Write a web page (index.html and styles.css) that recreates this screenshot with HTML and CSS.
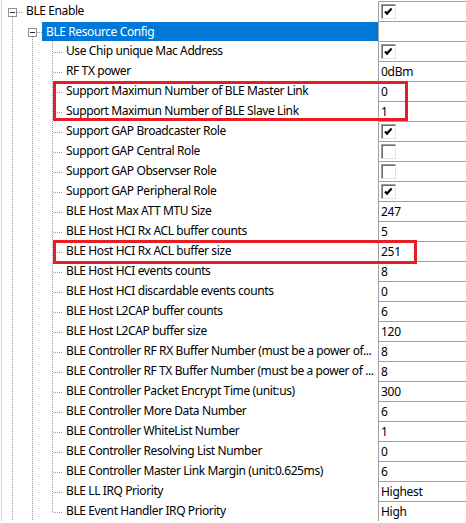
FILE: index.html
```html
<!DOCTYPE html>
<html>
<head>
  <meta charset="UTF-8">
  <title>BLE Config</title>
  <link rel="stylesheet" href="styles.css">
</head>
<body>
  <div class="grid">
    <div class="row">
      <div class="name">
        <span class="guide toggle"><span class="box"></span></span>
        <span class="label">BLE Enable</span>
      </div>
      <div class="value"><span class="check on"></span></div>
    </div>
    <div class="row">
      <div class="name">
        <span class="guide line"></span>
        <span class="guide toggle"><span class="box"></span></span>
        <span class="label selected">BLE Resource Config</span>
      </div>
      <div class="value"></div>
    </div>
    <div class="row">
      <div class="name"><span class="guide line"></span><span class="guide line"></span><span class="guide branch"></span>
        <span class="label">Use Chip unique Mac Address</span></div>
      <div class="value"><span class="check on"></span></div>
    </div>
    <div class="row">
      <div class="name"><span class="guide line"></span><span class="guide line"></span><span class="guide branch"></span>
        <span class="label">RF TX power</span></div>
      <div class="value">0dBm</div>
    </div>
    <div class="row">
      <div class="name"><span class="guide line"></span><span class="guide line"></span><span class="guide branch"></span>
        <span class="label">Support Maximun Number of BLE Master Link</span></div>
      <div class="value">0</div>
    </div>
    <div class="row">
      <div class="name"><span class="guide line"></span><span class="guide line"></span><span class="guide branch"></span>
        <span class="label">Support Maximun Number of BLE Slave Link</span></div>
      <div class="value">1</div>
    </div>
    <div class="row">
      <div class="name"><span class="guide line"></span><span class="guide line"></span><span class="guide branch"></span>
        <span class="label">Support GAP Broadcaster Role</span></div>
      <div class="value"><span class="check on"></span></div>
    </div>
    <div class="row">
      <div class="name"><span class="guide line"></span><span class="guide line"></span><span class="guide branch"></span>
        <span class="label">Support GAP Central Role</span></div>
      <div class="value"><span class="check"></span></div>
    </div>
    <div class="row">
      <div class="name"><span class="guide line"></span><span class="guide line"></span><span class="guide branch"></span>
        <span class="label">Support GAP Observser Role</span></div>
      <div class="value"><span class="check"></span></div>
    </div>
    <div class="row">
      <div class="name"><span class="guide line"></span><span class="guide line"></span><span class="guide branch"></span>
        <span class="label">Support GAP Peripheral Role</span></div>
      <div class="value"><span class="check on"></span></div>
    </div>
    <div class="row">
      <div class="name"><span class="guide line"></span><span class="guide line"></span><span class="guide branch"></span>
        <span class="label">BLE Host Max ATT MTU Size</span></div>
      <div class="value">247</div>
    </div>
    <div class="row">
      <div class="name"><span class="guide line"></span><span class="guide line"></span><span class="guide branch"></span>
        <span class="label">BLE Host HCI Rx ACL buffer counts</span></div>
      <div class="value">5</div>
    </div>
    <div class="row">
      <div class="name"><span class="guide line"></span><span class="guide line"></span><span class="guide branch"></span>
        <span class="label">BLE Host HCI Rx ACL buffer size</span></div>
      <div class="value">251</div>
    </div>
    <div class="row">
      <div class="name"><span class="guide line"></span><span class="guide line"></span><span class="guide branch"></span>
        <span class="label">BLE Host HCI events counts</span></div>
      <div class="value">8</div>
    </div>
    <div class="row">
      <div class="name"><span class="guide line"></span><span class="guide line"></span><span class="guide branch"></span>
        <span class="label">BLE Host HCI discardable events counts</span></div>
      <div class="value">0</div>
    </div>
    <div class="row">
      <div class="name"><span class="guide line"></span><span class="guide line"></span><span class="guide branch"></span>
        <span class="label">BLE Host L2CAP buffer counts</span></div>
      <div class="value">6</div>
    </div>
    <div class="row">
      <div class="name"><span class="guide line"></span><span class="guide line"></span><span class="guide branch"></span>
        <span class="label">BLE Host L2CAP buffer size</span></div>
      <div class="value">120</div>
    </div>
    <div class="row">
      <div class="name"><span class="guide line"></span><span class="guide line"></span><span class="guide branch"></span>
        <span class="label">BLE Controller RF RX Buffer Number (must be a power of...</span></div>
      <div class="value">8</div>
    </div>
    <div class="row">
      <div class="name"><span class="guide line"></span><span class="guide line"></span><span class="guide branch"></span>
        <span class="label">BLE Controller RF TX Buffer Number (must be a power of ...</span></div>
      <div class="value">8</div>
    </div>
    <div class="row">
      <div class="name"><span class="guide line"></span><span class="guide line"></span><span class="guide branch"></span>
        <span class="label">BLE Controller Packet Encrypt Time (unit:us)</span></div>
      <div class="value">300</div>
    </div>
    <div class="row">
      <div class="name"><span class="guide line"></span><span class="guide line"></span><span class="guide branch"></span>
        <span class="label">BLE Controller More Data Number</span></div>
      <div class="value">6</div>
    </div>
    <div class="row">
      <div class="name"><span class="guide line"></span><span class="guide line"></span><span class="guide branch"></span>
        <span class="label">BLE Controller WhiteList Number</span></div>
      <div class="value">1</div>
    </div>
    <div class="row">
      <div class="name"><span class="guide line"></span><span class="guide line"></span><span class="guide branch"></span>
        <span class="label">BLE Controller Resolving List Number</span></div>
      <div class="value">0</div>
    </div>
    <div class="row">
      <div class="name"><span class="guide line"></span><span class="guide line"></span><span class="guide branch"></span>
        <span class="label">BLE Controller Master Link Margin (unit:0.625ms)</span></div>
      <div class="value">6</div>
    </div>
    <div class="row">
      <div class="name"><span class="guide line"></span><span class="guide line"></span><span class="guide branch"></span>
        <span class="label">BLE LL IRQ Priority</span></div>
      <div class="value">Highest</div>
    </div>
    <div class="row">
      <div class="name"><span class="guide line"></span><span class="guide line"></span><span class="guide branch last"></span>
        <span class="label">BLE Event Handler IRQ Priority</span></div>
      <div class="value">High</div>
    </div>

    <!-- red annotation boxes drawn over the grid -->
    <div class="mark mark-links"></div>
    <div class="mark mark-acl"></div>
  </div>
</body>
</html>
```

FILE: styles.css
```css
body {
  margin: 0;
  background: #fff;
  font-family: "Noto Sans", "Open Sans", sans-serif;
  font-size: 12px;
  color: #000;
  overflow: hidden;
}
.grid {
  position: relative;
  margin-left: 1px;
  padding-top: 1px;
  border-left: 1px solid #d4d4d4;
}
.row {
  display: flex;
  height: 20px;
}
.name {
  display: flex;
  width: 376px;
  flex-shrink: 0;
  overflow: hidden;
}
.guide {
  display: block;
  width: 20px;
  height: 20px;
  flex-shrink: 0;
  background-repeat: no-repeat;
}
.guide.line {
  background-image: repeating-linear-gradient(#a0a0a0 0 1px, transparent 1px 2px);
  background-position: 10px 0;
  background-size: 1px 100%;
}
.guide.branch {
  background-image:
    repeating-linear-gradient(#a0a0a0 0 1px, transparent 1px 2px),
    repeating-linear-gradient(to right, #a0a0a0 0 1px, transparent 1px 2px);
  background-position: 10px 0, 11px 11px;
  background-size: 1px 100%, 10px 1px;
}
.guide.branch.last {
  background-size: 1px 12px, 10px 1px;
}
.guide.toggle {
  background-image:
    repeating-linear-gradient(#a0a0a0 0 1px, transparent 1px 2px),
    repeating-linear-gradient(to right, #a0a0a0 0 1px, transparent 1px 2px);
  background-position: 10px 16px, 15px 11px;
  background-size: 1px 4px, 8px 1px;
}
.box {
  display: block;
  width: 7px;
  height: 7px;
  margin: 7px 0 0 6px;
  border: 1px solid #8e8f8f;
  background: #fff linear-gradient(#1b2a4a, #1b2a4a) center / 5px 1px no-repeat;
}
.label {
  flex: 1;
  padding-left: 4px;
  line-height: 20px;
  white-space: nowrap;
  overflow: hidden;
  letter-spacing: -0.4px;
}
.label.selected {
  background: #0078d7;
  color: #fff;
  margin-top: 1px;
  line-height: 19px;
}
.value {
  flex: 1;
  box-sizing: border-box;
  height: 20px;
  border-top: 1px solid #a0a0a0;
  border-left: 1px solid #a0a0a0;
  padding-left: 2px;
  line-height: 19px;
  white-space: nowrap;
  letter-spacing: -0.3px;
}
.check {
  display: block;
  box-sizing: border-box;
  width: 15px;
  height: 15px;
  margin-top: 2px;
  border: 1px solid;
  border-color: #a0a0a0 #e3e3e3 #e3e3e3 #a0a0a0;
  box-shadow: inset 1px 1px 0 #6b6b6b;
  background: #fff;
}
.check.on {
  background: #fff url("data:image/svg+xml,%3Csvg xmlns='http://www.w3.org/2000/svg' width='13' height='13'%3E%3Cpath d='M3 6.5 L5 8.6 L9.6 3.6' fill='none' stroke='%23000' stroke-width='2.2'/%3E%3C/svg%3E") 0 0 no-repeat;
}
.mark {
  position: absolute;
  border: 3px solid #e81c25;
  box-sizing: border-box;
}
.mark-links {
  left: 51px;
  top: 81px;
  width: 355px;
  height: 40px;
}
.mark-acl {
  left: 51px;
  top: 240px;
  width: 364px;
  height: 24px;
}
```
